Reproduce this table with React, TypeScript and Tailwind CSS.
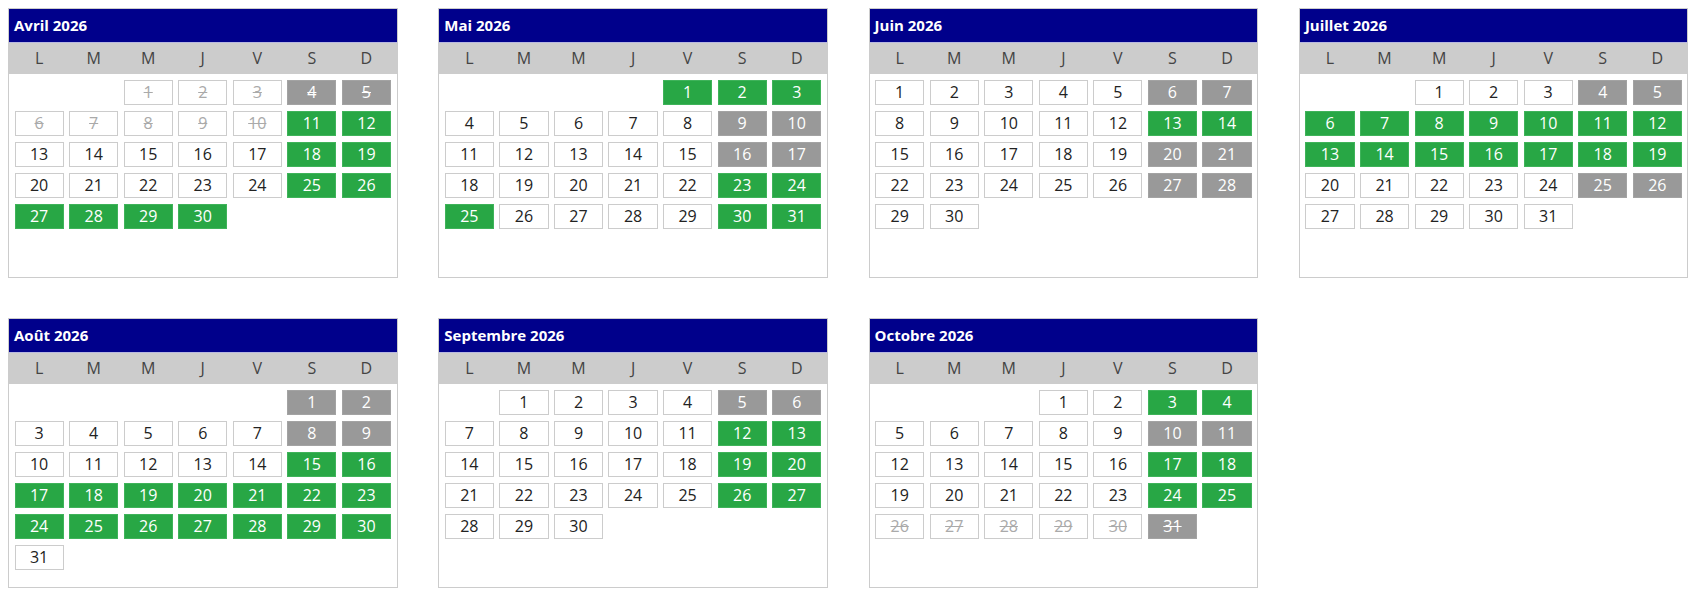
import React from "react";

type S = "w" | "g" | "x" | "sw" | "sx";
// w: white, g: green, x: gray, sw: struck white, sx: struck gray

type Month = { name: string; offset: number; days: S[] };

function build(len: number, spec: [number, number, S][]): S[] {
  const arr: S[] = Array(len).fill("w");
  for (const [a, b, s] of spec) for (let d = a; d <= b; d++) arr[d - 1] = s;
  return arr;
}

const months: Month[] = [
  {
    name: "Avril 2026",
    offset: 2,
    days: build(30, [
      [1, 3, "sw"],
      [4, 5, "sx"],
      [6, 10, "sw"],
      [11, 12, "g"],
      [18, 19, "g"],
      [25, 30, "g"],
    ]),
  },
  {
    name: "Mai 2026",
    offset: 4,
    days: build(31, [
      [1, 3, "g"],
      [9, 10, "x"],
      [16, 17, "x"],
      [23, 25, "g"],
      [30, 31, "g"],
    ]),
  },
  {
    name: "Juin 2026",
    offset: 0,
    days: build(30, [
      [6, 7, "x"],
      [13, 14, "g"],
      [20, 21, "x"],
      [27, 28, "x"],
    ]),
  },
  {
    name: "Juillet 2026",
    offset: 2,
    days: build(31, [
      [4, 5, "x"],
      [6, 19, "g"],
      [25, 26, "x"],
    ]),
  },
  {
    name: "Août 2026",
    offset: 5,
    days: build(31, [
      [1, 2, "x"],
      [8, 9, "x"],
      [15, 30, "g"],
    ]),
  },
  {
    name: "Septembre 2026",
    offset: 1,
    days: build(30, [
      [5, 6, "x"],
      [12, 13, "g"],
      [19, 20, "g"],
      [26, 27, "g"],
    ]),
  },
  {
    name: "Octobre 2026",
    offset: 3,
    days: build(31, [
      [3, 4, "g"],
      [10, 11, "x"],
      [17, 18, "g"],
      [24, 25, "g"],
      [26, 30, "sw"],
      [31, 31, "sx"],
    ]),
  },
];

const weekdays = ["L", "M", "M", "J", "V", "S", "D"];

function cellClass(s: S): string {
  switch (s) {
    case "g":
      return "bg-[#28a745] border-[#3fb35a] text-white";
    case "x":
      return "bg-[#999999] border-[#a3a3a3] text-white";
    case "sx":
      return "bg-[#999999] border-[#a3a3a3] text-white line-through";
    case "sw":
      return "bg-white border-[#cccccc] text-[#aaaaaa] line-through";
    default:
      return "bg-white border-[#cccccc] text-[#222222]";
  }
}

function MonthCard({ m }: { m: Month }) {
  const cells: (null | { d: number; s: S })[] = [];
  for (let i = 0; i < m.offset; i++) cells.push(null);
  m.days.forEach((s, i) => cells.push({ d: i + 1, s }));
  return (
    <div className="w-[389.5px] h-[270px] border border-[#cccccc] bg-white flex flex-col">
      <div className="h-[34px] bg-[#00008b] border-b border-[#b8b8e0] flex items-center pl-[5px] text-white font-bold text-[15px] leading-none">
        {m.name}
      </div>
      <div className="h-[31px] bg-[#cccccc] grid grid-cols-7 gap-x-[5.4px] px-[5.5px] items-center text-[16px] text-[#444444]">
        {weekdays.map((w, i) => (
          <div key={i} className="text-center">
            {w}
          </div>
        ))}
      </div>
      <div className="grid grid-cols-7 gap-x-[5.4px] gap-y-[6px] px-[5.5px] pt-[6px] auto-rows-[25px]">
        {cells.map((c, i) =>
          c ? (
            <div
              key={i}
              className={`border flex items-center justify-center text-[16px] leading-none ${cellClass(c.s)}`}
            >
              {c.d}
            </div>
          ) : (
            <div key={i} />
          )
        )}
      </div>
    </div>
  );
}

export default function App() {
  return (
    <div
      className="w-[1694px] h-[600px] bg-white pl-[8px] pt-[7.5px]"
      style={{ fontFamily: '"Open Sans", "Noto Sans", sans-serif' }}
    >
      <div className="flex flex-wrap gap-x-[40.8px] gap-y-[40px] w-[1685px]">
        {months.map((m) => (
          <MonthCard key={m.name} m={m} />
        ))}
      </div>
    </div>
  );
}
